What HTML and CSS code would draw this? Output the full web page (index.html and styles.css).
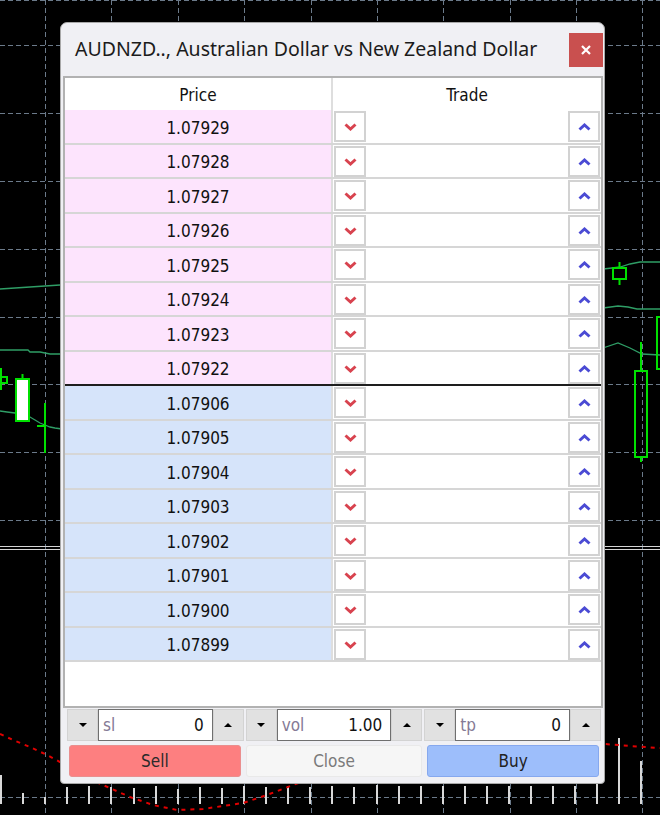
FILE: index.html
```html
<!DOCTYPE html>
<html>
<head>
<meta charset="utf-8">
<title>AUDNZD</title>
<link rel="stylesheet" href="styles.css">
</head>
<body>
<svg class="chart" width="660" height="815" viewBox="0 0 660 815">
  <g class="grid">
    <path d="M0 0.5H660"/>
    <path d="M45.5 0V815M111.5 0V815M178.5 0V815M244.5 0V815M311.5 0V815M377.5 0V815M443.5 0V815M510.5 0V815M576.5 0V815M642.5 0V815"/>
    <path d="M0 45.5H660M0 113.5H660M0 181.5H660M0 249.5H660M0 317.5H660M0 384.5H660M0 452.5H660M0 520.5H660M0 797.5H660"/>
  </g>
  <path class="sep" d="M0 546.5H660M0 549.5H660"/>
  <g class="ma">
    <polyline points="0,289 30,287 60,285"/>
    <polyline points="0,350 28,350 30,352 40,352 50,354 62,354"/>
    <polyline points="0,411 7,412 15,413 25,415 30,417 35,420 40,423 45,425 50,427 55,428 62,429"/>
    <polyline points="603,269 612,268 620,267 630,264 640,262 660,262"/>
    <polyline points="603,308 618,306 628,307 637,309 660,309"/>
    <polyline points="603,348 618,343 630,348 642,354 660,355"/>
  </g>
  <g class="candle">
    <rect class="white" x="16" y="379" width="13" height="42"/>
    <path d="M22.5 374V379"/>
    <rect x="-2" y="377" width="9" height="6"/>
    <path d="M1 368V390"/>
    <path d="M45 403V453M37 426H45"/>
    <rect x="613" y="268" width="13" height="11"/>
    <path d="M619.5 262V268M619.5 279V285"/>
    <rect x="635" y="371" width="12" height="86"/>
    <path d="M641 342V371M641 457V462"/>
    <rect x="657" y="317" width="10" height="52"/>
  </g>
  <g class="vol">
    <path d="M1 775V804M23 793V804M45 797V804M67 787V804M89 786V804M111 787V804M134 788V804M156 786V804M178 789V804M200 787V804M222 788V804M244 786V804M266 787V804M288 786V804M310 787V804M332 786V804M354 787V804M377 785V804M399 786V804M421 786V804M443 786V804M465 786V804M487 786V804M509 786V804M531 786V804M553 786V804M575 786V804M597 783V804M619 738V804M641 761V804"/>
  </g>
  <polyline class="red" points="0,734 13,740 30,747 47,755 60,762 80,775 103,785 130,797 153,805 177,810 203,809 243,803 267,795 293,785 330,772 400,760 500,750 560,745 605,744 630,746 660,748"/>
</svg>

<div class="window">
  <div class="titlebar">
    <span class="title">AUDNZD.., Australian Dollar vs New Zealand Dollar</span>
    <button class="close-btn" type="button" aria-label="Close">
      <svg width="10" height="10" viewBox="0 0 10 10"><path d="M1 1L9 9M9 1L1 9"/></svg>
    </button>
  </div>

  <div class="book">
    <div class="head">
      <div class="price">Price</div>
      <div class="trade-h">Trade</div>
    </div>

    <div class="rows">
      <div class="row ask"><div class="price">1.07929</div><div class="trade"><span class="tbtn dn"><svg viewBox="0 0 13 8"><polyline points="1.5,1.5 6.5,6 11.5,1.5"/></svg></span><span class="tbtn up"><svg viewBox="0 0 13 8"><polyline points="1.5,6.5 6.5,2 11.5,6.5"/></svg></span></div></div>
      <div class="row ask"><div class="price">1.07928</div><div class="trade"><span class="tbtn dn"><svg viewBox="0 0 13 8"><polyline points="1.5,1.5 6.5,6 11.5,1.5"/></svg></span><span class="tbtn up"><svg viewBox="0 0 13 8"><polyline points="1.5,6.5 6.5,2 11.5,6.5"/></svg></span></div></div>
      <div class="row ask"><div class="price">1.07927</div><div class="trade"><span class="tbtn dn"><svg viewBox="0 0 13 8"><polyline points="1.5,1.5 6.5,6 11.5,1.5"/></svg></span><span class="tbtn up"><svg viewBox="0 0 13 8"><polyline points="1.5,6.5 6.5,2 11.5,6.5"/></svg></span></div></div>
      <div class="row ask"><div class="price">1.07926</div><div class="trade"><span class="tbtn dn"><svg viewBox="0 0 13 8"><polyline points="1.5,1.5 6.5,6 11.5,1.5"/></svg></span><span class="tbtn up"><svg viewBox="0 0 13 8"><polyline points="1.5,6.5 6.5,2 11.5,6.5"/></svg></span></div></div>
      <div class="row ask"><div class="price">1.07925</div><div class="trade"><span class="tbtn dn"><svg viewBox="0 0 13 8"><polyline points="1.5,1.5 6.5,6 11.5,1.5"/></svg></span><span class="tbtn up"><svg viewBox="0 0 13 8"><polyline points="1.5,6.5 6.5,2 11.5,6.5"/></svg></span></div></div>
      <div class="row ask"><div class="price">1.07924</div><div class="trade"><span class="tbtn dn"><svg viewBox="0 0 13 8"><polyline points="1.5,1.5 6.5,6 11.5,1.5"/></svg></span><span class="tbtn up"><svg viewBox="0 0 13 8"><polyline points="1.5,6.5 6.5,2 11.5,6.5"/></svg></span></div></div>
      <div class="row ask"><div class="price">1.07923</div><div class="trade"><span class="tbtn dn"><svg viewBox="0 0 13 8"><polyline points="1.5,1.5 6.5,6 11.5,1.5"/></svg></span><span class="tbtn up"><svg viewBox="0 0 13 8"><polyline points="1.5,6.5 6.5,2 11.5,6.5"/></svg></span></div></div>
      <div class="row ask last"><div class="price">1.07922</div><div class="trade"><span class="tbtn dn"><svg viewBox="0 0 13 8"><polyline points="1.5,1.5 6.5,6 11.5,1.5"/></svg></span><span class="tbtn up"><svg viewBox="0 0 13 8"><polyline points="1.5,6.5 6.5,2 11.5,6.5"/></svg></span></div></div>

      <div class="row bid"><div class="price">1.07906</div><div class="trade"><span class="tbtn dn"><svg viewBox="0 0 13 8"><polyline points="1.5,1.5 6.5,6 11.5,1.5"/></svg></span><span class="tbtn up"><svg viewBox="0 0 13 8"><polyline points="1.5,6.5 6.5,2 11.5,6.5"/></svg></span></div></div>
      <div class="row bid"><div class="price">1.07905</div><div class="trade"><span class="tbtn dn"><svg viewBox="0 0 13 8"><polyline points="1.5,1.5 6.5,6 11.5,1.5"/></svg></span><span class="tbtn up"><svg viewBox="0 0 13 8"><polyline points="1.5,6.5 6.5,2 11.5,6.5"/></svg></span></div></div>
      <div class="row bid"><div class="price">1.07904</div><div class="trade"><span class="tbtn dn"><svg viewBox="0 0 13 8"><polyline points="1.5,1.5 6.5,6 11.5,1.5"/></svg></span><span class="tbtn up"><svg viewBox="0 0 13 8"><polyline points="1.5,6.5 6.5,2 11.5,6.5"/></svg></span></div></div>
      <div class="row bid"><div class="price">1.07903</div><div class="trade"><span class="tbtn dn"><svg viewBox="0 0 13 8"><polyline points="1.5,1.5 6.5,6 11.5,1.5"/></svg></span><span class="tbtn up"><svg viewBox="0 0 13 8"><polyline points="1.5,6.5 6.5,2 11.5,6.5"/></svg></span></div></div>
      <div class="row bid"><div class="price">1.07902</div><div class="trade"><span class="tbtn dn"><svg viewBox="0 0 13 8"><polyline points="1.5,1.5 6.5,6 11.5,1.5"/></svg></span><span class="tbtn up"><svg viewBox="0 0 13 8"><polyline points="1.5,6.5 6.5,2 11.5,6.5"/></svg></span></div></div>
      <div class="row bid"><div class="price">1.07901</div><div class="trade"><span class="tbtn dn"><svg viewBox="0 0 13 8"><polyline points="1.5,1.5 6.5,6 11.5,1.5"/></svg></span><span class="tbtn up"><svg viewBox="0 0 13 8"><polyline points="1.5,6.5 6.5,2 11.5,6.5"/></svg></span></div></div>
      <div class="row bid"><div class="price">1.07900</div><div class="trade"><span class="tbtn dn"><svg viewBox="0 0 13 8"><polyline points="1.5,1.5 6.5,6 11.5,1.5"/></svg></span><span class="tbtn up"><svg viewBox="0 0 13 8"><polyline points="1.5,6.5 6.5,2 11.5,6.5"/></svg></span></div></div>
      <div class="row bid"><div class="price">1.07899</div><div class="trade"><span class="tbtn dn"><svg viewBox="0 0 13 8"><polyline points="1.5,1.5 6.5,6 11.5,1.5"/></svg></span><span class="tbtn up"><svg viewBox="0 0 13 8"><polyline points="1.5,6.5 6.5,2 11.5,6.5"/></svg></span></div></div>
    </div>

    <div class="filler"></div>
  </div>

  <div class="controls">
    <div class="spin">
      <span class="sbtn"><i class="tri dn"></i></span>
      <div class="field"><span class="lbl">sl</span><span class="val">0</span></div>
      <span class="sbtn"><i class="tri up"></i></span>
    </div>
    <div class="spin">
      <span class="sbtn"><i class="tri dn"></i></span>
      <div class="field"><span class="lbl">vol</span><span class="val">1.00</span></div>
      <span class="sbtn"><i class="tri up"></i></span>
    </div>
    <div class="spin">
      <span class="sbtn"><i class="tri dn"></i></span>
      <div class="field"><span class="lbl">tp</span><span class="val">0</span></div>
      <span class="sbtn"><i class="tri up"></i></span>
    </div>
  </div>

  <div class="actions">
    <button class="act sell" type="button">Sell</button>
    <button class="act closepos" type="button">Close</button>
    <button class="act buy" type="button">Buy</button>
  </div>
</div>
</body>
</html>
```

FILE: styles.css
```css
html, body {
  margin: 0;
  padding: 0;
  background: #000;
}

body {
  width: 660px;
  height: 815px;
  overflow: hidden;
  position: relative;
  font-family: "DejaVu Sans Condensed", "DejaVu Sans", sans-serif;
  font-size: 17px;
  color: #111;
}

/* ---------- chart backdrop ---------- */
.chart {
  display: block;
}
.grid path {
  stroke: #6b7a8a;
  stroke-width: 1;
  stroke-dasharray: 5 3;
  fill: none;
}
.sep {
  stroke: #d4d4d4;
  stroke-width: 1;
}
.ma polyline {
  fill: none;
  stroke: #2f9e66;
  stroke-width: 1.3;
}
.candle rect,
.candle path {
  fill: none;
  stroke: #00e000;
  stroke-width: 2;
}
.candle rect.white {
  fill: #fff;
}
.vol path {
  stroke: #d8d8d8;
  stroke-width: 2;
}
.red {
  fill: none;
  stroke: #e00000;
  stroke-width: 2;
  stroke-dasharray: 4 5;
}

/* ---------- window ---------- */
.window {
  position: absolute;
  left: 60px;
  top: 22px;
  width: 545px;
  height: 762px;
  box-sizing: border-box;
  border: 1px solid #a8a8a8;
  border-radius: 7px 7px 4px 4px;
  background: #f0f0f4;
  display: flex;
  flex-direction: column;
}

.titlebar {
  height: 53px;
  box-sizing: border-box;
  padding: 10px 1px 0 14px;
  display: flex;
  justify-content: space-between;
  align-items: flex-start;
}
.title {
  font-family: "Noto Sans", sans-serif;
  font-size: 19.5px;
  line-height: 32px;
  color: #1b1b1b;
  white-space: nowrap;
}
.close-btn {
  width: 34px;
  height: 34px;
  border: 0;
  padding: 0;
  margin: 0;
  background: #c9504f;
  display: flex;
  align-items: center;
  justify-content: center;
}
.close-btn svg path {
  stroke: #fff;
  stroke-width: 2.2;
}

/* ---------- order book ---------- */
.book {
  margin: 0 1px 0 2px;
  height: 632px;
  box-sizing: border-box;
  border: 2px solid #b2b2b2;
  background: #fff;
  display: flex;
  flex-direction: column;
}

.head,
.row {
  display: grid;
  grid-template-columns: 268px 1fr;
}
.head {
  height: 32px;
  line-height: 35px;
  text-align: center;
}
.head .price {
  border-right: 2px solid #dedede;
}

.rows {
  display: flex;
  flex-direction: column;
}
.row {
  height: 35px;
  box-sizing: border-box;
  border-bottom: 2px solid #d6d6d6;
  overflow: hidden;
}
.row:nth-child(even) {
  height: 34px;
}
.row.last {
  border-bottom-color: #1e1e1e;
}
.row .price {
  border-right: 2px solid #dedede;
  display: flex;
  align-items: center;
  justify-content: center;
  padding-top: 2px;
}
.ask .price {
  background: #fde4fd;
}
.bid .price {
  background: #d6e4fa;
}

.trade {
  display: flex;
  justify-content: space-between;
  align-items: flex-start;
  padding: 1px 1px 0 1px;
}
.tbtn {
  width: 32px;
  height: 31px;
  box-sizing: border-box;
  border: 2px solid #d2d2d2;
  background: #fff;
  display: flex;
  align-items: center;
  justify-content: center;
}
.tbtn svg {
  width: 13px;
  height: 8px;
}
.tbtn polyline {
  fill: none;
  stroke-width: 3;
  stroke-linecap: butt;
}
.tbtn.dn polyline {
  stroke: #d8434f;
}
.tbtn.up polyline {
  stroke: #4b4bd4;
}

.filler {
  flex: 1;
}

/* ---------- spin controls ---------- */
.controls {
  margin: 1px 3px 0 6px;
  height: 32px;
  display: grid;
  grid-template-columns: 1fr 1fr 1fr;
  gap: 2px;
}
.spin {
  display: flex;
}
.sbtn {
  width: 31px;
  flex: none;
  box-sizing: border-box;
  background: #e1e1e1;
  border: 1px solid #d3d3d3;
  display: flex;
  align-items: center;
  justify-content: center;
}
.tri {
  width: 0;
  height: 0;
  border-left: 4px solid transparent;
  border-right: 4px solid transparent;
}
.tri.dn {
  border-top: 4px solid #000;
}
.tri.up {
  border-bottom: 4px solid #000;
}
.field {
  flex: 1;
  min-width: 0;
  background: #fff;
  border: 1px solid #6f6f6f;
  display: flex;
  align-items: center;
  justify-content: space-between;
  padding: 0 8px 0 4px;
}
.lbl {
  color: #857a95;
}
.val {
  color: #111;
}

/* ---------- action buttons ---------- */
.actions {
  margin: 4px 3px 0 6px;
  height: 32px;
  display: grid;
  grid-template-columns: 1fr 1fr 1fr;
  gap: 2px;
}
.act {
  font-family: "DejaVu Sans Condensed", "DejaVu Sans", sans-serif;
  font-size: 17px;
  border-radius: 3px;
  padding: 0;
  margin: 0;
}
.sell {
  margin: 0 3px 0 2px;
  background: #fd7f80;
  border: 1px solid #ea8e8e;
  color: #2a2a2a;
}
.closepos {
  background: #f6f6f6;
  border: 1px solid #e9e9e9;
  color: #7a7a7a;
}
.buy {
  margin: 0 2px 0 3px;
  background: #9dbefb;
  border: 1px solid #86a8ee;
  color: #222;
}
```
